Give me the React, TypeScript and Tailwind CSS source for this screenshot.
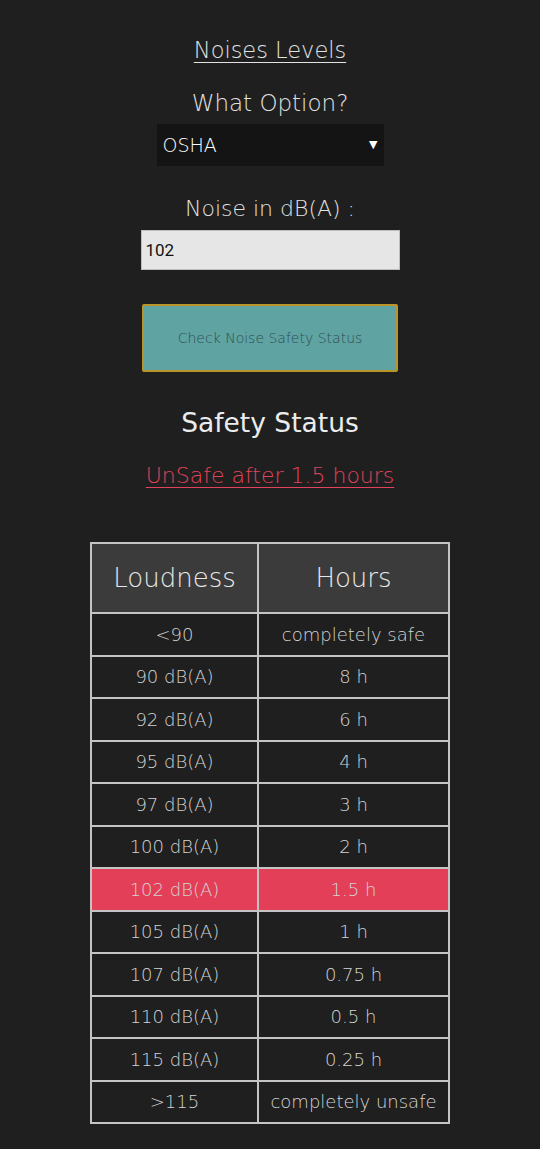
import { useState } from 'react';

const rows = [
  { loud: '<90', hours: 'completely safe' },
  { loud: '90 dB(A)', hours: '8 h' },
  { loud: '92 dB(A)', hours: '6 h' },
  { loud: '95 dB(A)', hours: '4 h' },
  { loud: '97 dB(A)', hours: '3 h' },
  { loud: '100 dB(A)', hours: '2 h' },
  { loud: '102 dB(A)', hours: '1.5 h', hot: true },
  { loud: '105 dB(A)', hours: '1 h' },
  { loud: '107 dB(A)', hours: '0.75 h' },
  { loud: '110 dB(A)', hours: '0.5 h' },
  { loud: '115 dB(A)', hours: '0.25 h' },
  { loud: '>115', hours: 'completely unsafe' },
];

export default function App() {
  const [noise, setNoise] = useState('102');

  return (
    <div className="min-h-[1149px] w-[540px] bg-[#1f1f1f] text-[#e2e2e2] font-['DejaVu_Sans',sans-serif] font-extralight flex flex-col items-center">
      <h1 className="mt-[35px] text-[22.5px] leading-[30px] underline underline-offset-4 decoration-1">Noises Levels</h1>

      <label className="mt-[23px] text-[23px] leading-[30px]">What Option?</label>
      <div className="mt-[6px] w-[227px] h-[42px] bg-[#141414] flex items-center justify-between pl-[6px] pr-[6px]">
        <span className="text-[19px] text-white">OSHA</span>
        <span className="text-[11px] text-white font-normal">▼</span>
      </div>

      <label className="mt-[28px] text-[22px] leading-[30px]">Noise in dB(A) :</label>
      <input
        value={noise}
        onChange={e => setNoise(e.target.value)}
        className="mt-[6px] w-[259px] h-[40px] bg-[#e6e6e6] text-[#111] px-[4px] text-[17px] font-['Roboto',sans-serif] font-normal outline-none border border-[#bdbdbd]"
      />

      <button className="mt-[34px] w-[256px] h-[68px] bg-[#5fa3a3] border-2 border-[#b8942a] rounded-[2px] text-[14px] text-[#2f4f52] font-light">
        Check Noise Safety Status
      </button>

      <h2 className="mt-[33px] text-[26.5px] leading-[36px] font-normal text-[#ececec]">Safety Status</h2>
      <p className="mt-[20px] text-[22px] leading-[30px] text-[#e0435b] underline underline-offset-4 decoration-1">UnSafe after 1.5 hours</p>

      <table className="mt-[51px] border-collapse border-2 border-[#c4c4c4] text-[#d4d4d4]">
        <thead>
          <tr className="bg-[#3b3b3b] h-[70px]">
            <th className="w-[167px] border-2 border-[#c4c4c4] text-[26px] font-extralight text-[#e8e8e8]">Loudness</th>
            <th className="w-[191px] border-2 border-[#c4c4c4] text-[26px] font-extralight text-[#e8e8e8]">Hours</th>
          </tr>
        </thead>
        <tbody>
          {rows.map(row => (
            <tr key={row.loud} className={'h-[42.5px] ' + (row.hot ? 'bg-[#e33f58]' : 'bg-[#1f1f1f]')}>
              <td className="border-2 border-[#c4c4c4] text-center text-[18px]">{row.loud}</td>
              <td className="border-2 border-[#c4c4c4] text-center text-[18px]">{row.hours}</td>
            </tr>
          ))}
        </tbody>
      </table>
    </div>
  );
}
